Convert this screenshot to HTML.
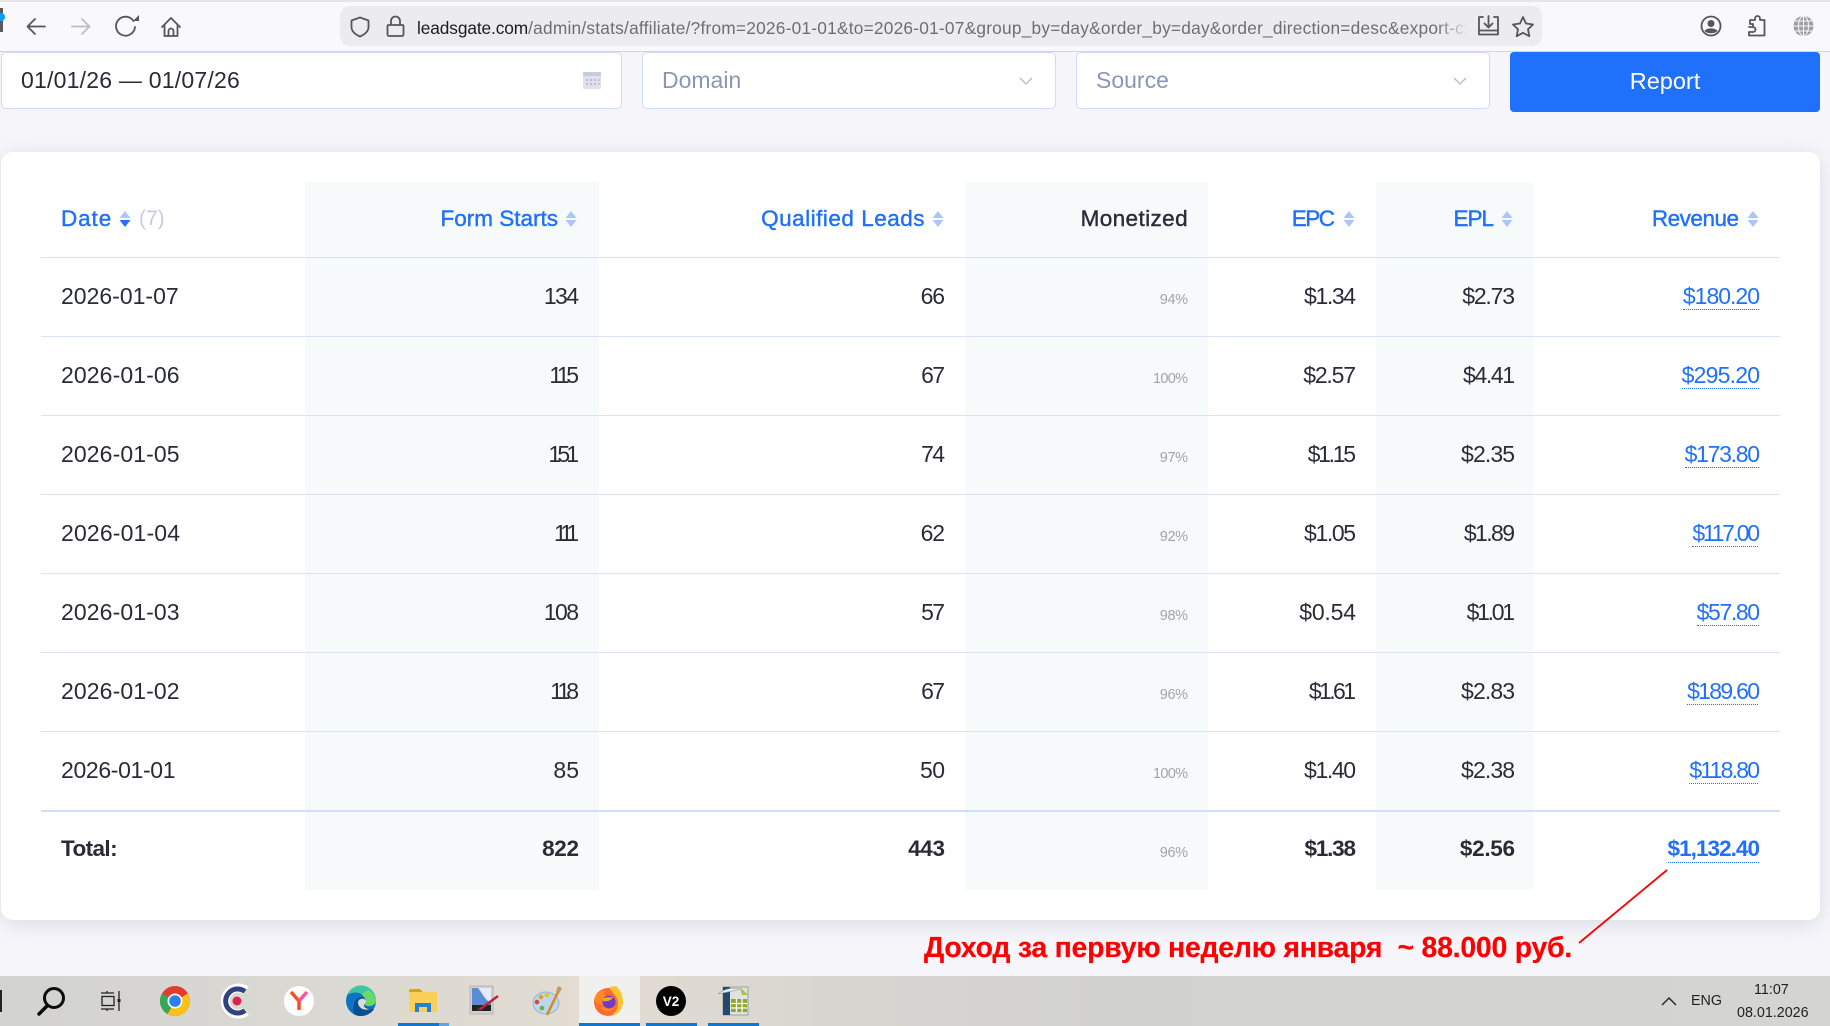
<!DOCTYPE html>
<html lang="en"><head><meta charset="utf-8"><title>Leadsgate stats</title>
<style>
html,body{margin:0;padding:0;width:1830px;height:1026px;overflow:hidden;background:#f6f6fa;font-family:"Liberation Sans","Noto Sans CJK SC",sans-serif;color:#2b2b38}
*{box-sizing:border-box}
.a{position:absolute}
#bar{left:0;top:0;width:1830px;height:52px;background:#f9f9fb;border-top:2px solid #e6e6ea;border-bottom:1px solid #d6d6da}
#url{left:340px;top:6px;width:1202px;height:40px;background:#ececee;border-radius:10px}
#urlt{left:417px;top:8px;width:1051px;height:40px;line-height:40px;font-size:17.3px;letter-spacing:.23px;white-space:nowrap;overflow:hidden;color:#6e6e73;-webkit-mask-image:linear-gradient(90deg,#000 97%,transparent 100%);mask-image:linear-gradient(90deg,#000 97%,transparent 100%)}
#urlt b{font-weight:400;color:#1c1b22;letter-spacing:-.1px}
.inp{top:52px;height:57px;background:#fff;border:1px solid #cbdcf8;border-radius:5px;font-size:23px;line-height:54px}
.inp span{position:absolute;top:0;white-space:nowrap}
#rep{left:1510px;top:52px;width:310px;height:60px;background:#1f70fb;border-radius:4px;color:#fff;text-align:center;font-size:23.5px;line-height:58px}
#card{left:1px;top:152px;width:1819px;height:768px;background:#fff;border-radius:12px;box-shadow:0 4px 22px rgba(50,60,110,.14)}
.col{top:182px;height:708px;background:#f7fafb}
.ln{left:41px;width:1739px;height:1px;background:#d8e4f6}
.row{left:0;width:1830px;height:40px;line-height:40px;font-size:23px;white-space:nowrap}
.row div{position:absolute;top:0;letter-spacing:var(--l,0px);padding-right:calc(var(--l,0px) * -1)}
.d{left:61px}
.c1{right:1251px}.c2{right:885px}.c3{right:642px;font-size:14.5px;color:#a3a3a8;top:4px!important}
.c4{right:474px}.c5{right:315px}.c6{right:70px;color:#1f70fb}
.c6 span{border-bottom:1px dotted #1f70fb;display:inline-block;line-height:26px}
.tot{font-weight:700;font-size:22.5px}
.tot .c3{font-weight:400;font-size:14.5px}
.tot .c6{font-weight:700}
.h{font-size:22.5px;height:40px;line-height:40px;top:199px;color:#1f70fb;white-space:nowrap;-webkit-text-stroke:.4px currentColor;letter-spacing:var(--l,0px);padding-right:calc(var(--l,0px) * -1)}
#red{left:924px;top:926px;width:660px;height:44px;line-height:44px;font-size:28.4px;font-weight:700;color:#f00;white-space:pre;letter-spacing:-.22px;-webkit-text-stroke:.2px #f00}
#task{left:0;top:976px;width:1830px;height:50px;background:linear-gradient(90deg,#d2d2d0 0,#d9d8d3 15%,#e2dcd2 32%,#d9d6d1 45%,#d1d1cf 60%,#d4d4d2 100%)}
#act{left:579px;top:976px;width:61px;height:50px;background:#f0f0ef}
.u{top:1023px;height:3px;background:#0a78d4}
.tr{font-size:14.3px;color:#222;white-space:nowrap;line-height:20px;height:20px}
svg{position:absolute;left:0;top:0}
</style></head><body>
<div class="a" id="bar"></div>
<div class="a" id="url"></div>
<div class="a" id="urlt"><b>leadsgate.com</b>/admin/stats/affiliate/?from=2026-01-01&amp;to=2026-01-07&amp;group_by=day&amp;order_by=day&amp;order_direction=desc&amp;export-csv</div>

<div class="a inp" style="left:1px;width:621px"><span style="left:19px;letter-spacing:.22px">01/01/26 — 01/07/26</span></div>
<div class="a inp" style="left:642px;width:414px;color:#8b96b5"><span style="left:19px">Domain</span></div>
<div class="a inp" style="left:1076px;width:414px;color:#8b96b5"><span style="left:19px">Source</span></div>
<div class="a" id="rep">Report</div>

<div class="a" id="card"></div>
<div class="a col" style="left:305px;width:294px"></div>
<div class="a col" style="left:965px;width:243px"></div>
<div class="a col" style="left:1376px;width:157px"></div>

<div class="a ln" style="top:257px"></div>
<div class="a ln" style="top:336px"></div>
<div class="a ln" style="top:415px"></div>
<div class="a ln" style="top:494px"></div>
<div class="a ln" style="top:573px"></div>
<div class="a ln" style="top:652px"></div>
<div class="a ln" style="top:731px"></div>
<div class="a ln" style="top:810px;height:2px;background:#cfdefa"></div>

<div class="a h" style="left:61px;--l:.9px">Date</div>
<div class="a h" style="left:139px;color:#c6cbe0;-webkit-text-stroke:0;font-size:21px">(7)</div>
<div class="a h" style="right:1272px">Form Starts</div>
<div class="a h" style="right:905px;--l:.5px">Qualified Leads</div>
<div class="a h" style="right:642px;color:#2b2b38;--l:.4px">Monetized</div>
<div class="a h" style="right:495px;--l:-1.5px">EPC</div>
<div class="a h" style="right:336px;--l:-1px">EPL</div>
<div class="a h" style="right:91px;--l:-.5px">Revenue</div>

<div class="a row" style="top:276px"><div class="d">2026-01-07</div><div class="c1" style="--l:-1.6px">134</div><div class="c2" style="--l:-1.2px">66</div><div class="c3" style="--l:-.4px">94%</div><div class="c4" style="--l:-1.4px">$1.34</div><div class="c5" style="--l:-1.2px">$2.73</div><div class="c6" style="--l:-1px"><span>$180.20</span></div></div>
<div class="a row" style="top:355px"><div class="d" style="--l:.1px">2026-01-06</div><div class="c1" style="--l:-3.5px">115</div><div class="c2" style="--l:-1.7px">67</div><div class="c3" style="--l:-.7px">100%</div><div class="c4" style="--l:-1.2px">$2.57</div><div class="c5" style="--l:-1.4px">$4.41</div><div class="c6" style="--l:-.8px"><span>$295.20</span></div></div>
<div class="a row" style="top:434px"><div class="d" style="--l:.1px">2026-01-05</div><div class="c1" style="--l:-3.9px">151</div><div class="c2" style="--l:-1.7px">74</div><div class="c3" style="--l:-.4px">97%</div><div class="c4" style="--l:-2.3px">$1.15</div><div class="c5" style="--l:-.9px">$2.35</div><div class="c6" style="--l:-1.3px"><span>$173.80</span></div></div>
<div class="a row" style="top:513px"><div class="d" style="--l:.15px">2026-01-04</div><div class="c1" style="--l:-5px">111</div><div class="c2" style="--l:-1.2px">62</div><div class="c3" style="--l:-.4px">92%</div><div class="c4" style="--l:-1.4px">$1.05</div><div class="c5" style="--l:-1.6px">$1.89</div><div class="c6" style="--l:-2.3px"><span>$117.00</span></div></div>
<div class="a row" style="top:592px"><div class="d" style="--l:.1px">2026-01-03</div><div class="c1" style="--l:-1.6px">108</div><div class="c2" style="--l:-1.7px">57</div><div class="c3" style="--l:-.4px">98%</div><div class="c4" style="--l:-.2px">$0.54</div><div class="c5" style="--l:-2.3px">$1.01</div><div class="c6" style="--l:-1.4px"><span>$57.80</span></div></div>
<div class="a row" style="top:671px"><div class="d" style="--l:.1px">2026-01-02</div><div class="c1" style="--l:-3.9px">118</div><div class="c2" style="--l:-1.7px">67</div><div class="c3" style="--l:-.4px">96%</div><div class="c4" style="--l:-2.6px">$1.61</div><div class="c5" style="--l:-.9px">$2.83</div><div class="c6" style="--l:-1.7px"><span>$189.60</span></div></div>
<div class="a row" style="top:750px"><div class="d" style="--l:-.35px">2026-01-01</div><div class="c1">85</div><div class="c2" style="--l:-.6px">50</div><div class="c3" style="--l:-.7px">100%</div><div class="c4" style="--l:-1.4px">$1.40</div><div class="c5" style="--l:-.9px">$2.38</div><div class="c6" style="--l:-1.8px"><span>$118.80</span></div></div>
<div class="a row tot" style="top:829px"><div class="d" style="--l:-.6px">Total:</div><div class="c1" style="--l:-.3px">822</div><div class="c2" style="--l:-.3px">443</div><div class="c3" style="--l:-.4px">96%</div><div class="c4" style="--l:-1.2px">$1.38</div><div class="c5" style="--l:-.3px">$2.56</div><div class="c6" style="--l:-.95px"><span>$1,132.40</span></div></div>

<div class="a" id="red">Доход за первую неделю января  ~ 88.000 руб.</div>

<div class="a" id="task"></div>
<div class="a" id="act"></div>
<div class="a u" style="left:398px;width:41px"></div>
<div class="a u" style="left:439px;width:10px;background:#5ea6e4"></div>
<div class="a u" style="left:579px;width:61px"></div>
<div class="a u" style="left:646px;width:51px"></div>
<div class="a u" style="left:708px;width:51px"></div>
<div class="a tr" style="left:1691px;top:991px">ENG</div>
<div class="a tr" style="left:1754px;top:980px">11:07</div>
<div class="a tr" style="left:1737px;top:1003px">08.01.2026</div>

<svg width="1830" height="1026" viewBox="0 0 1830 1026" fill="none">
<!-- left marker -->
<rect x="0" y="8" width="3" height="24" fill="#5b5b66"/><circle cx="1" cy="17" r="4" fill="#0a9dff"/>
<!-- nav -->
<g stroke="#55555c" stroke-width="1.8" stroke-linecap="round" stroke-linejoin="round">
<path d="M45 26.5H28M35 19l-7.5 7.5L35 34"/>
<path d="M72 26.5h17M82 19l7.5 7.5L82 34" stroke="#bdbdc2"/>
<path d="M133.500 21A9.500 9.500 0 1 0 135 27"/>
<path d="M162 27l9-9 9 9M164.500 25v11h13V25M168.500 36v-5a2.500 2.500 0 0 1 5 0v5"/>
<path d="M360 17.500l8.500 3v6.500c0 4.500-4 7.500-8.500 9.500-4.500-2-8.500-5-8.500-9.500v-6.500z"/>
<path d="M391 25v-4a4.500 4.500 0 0 1 9 0v4M388.500 25h14a1 1 0 0 1 1 1v8.500a1.500 1.500 0 0 1-1.500 1.500h-13a1.500 1.500 0 0 1-1.500-1.500V26a1 1 0 0 1 1-1z"/>
<path d="M1483 17h-4v17.500h19V17h-4M1488.500 16v11M1484.500 23.500l4 4 4-4M1479 30.500h19"/>
<path d="M1523 17l3 6.500 7 1-5 4.800 1.300 6.900-6.300-3.400-6.300 3.400 1.300-6.900-5-4.800 7-1z"/>
<circle cx="1711" cy="26" r="9.500"/><circle cx="1711" cy="23.500" r="3.500" fill="#55555c" stroke="none"/><path d="M1704.500 31c2-3.500 11-3.500 13 0-3 3-10 3-13 0z" fill="#55555c" stroke="none"/>
<path d="M1749 27h4v-3h-3v-4h5v-1.500a2.500 2.500 0 0 1 5 0V20h4.500v15.500h-15.500v-3.500h4a2.300 2.300 0 0 0 0-5z"/>
</g>
<path d="M139 15v6h-6z" fill="#55555c"/>
<circle cx="1803.500" cy="26" r="10" fill="#a0a0a3"/>
<g stroke="#f9f9fb" stroke-width="1"><path d="M1793.500 26h20M1795 21h17M1795 31h17M1803.500 16v20"/><ellipse cx="1803.500" cy="26" rx="5" ry="10"/></g>
<!-- calendar, chevrons -->
<rect x="583" y="72" width="18" height="17" rx="2" fill="#dfe2ec"/><rect x="583" y="72" width="18" height="4" rx="1.500" fill="#c6ccdc"/>
<g fill="#b6bdd0"><rect x="586" y="79" width="2" height="2"/><rect x="590" y="79" width="2" height="2"/><rect x="594" y="79" width="2" height="2"/><rect x="598" y="79" width="1.500" height="2"/><rect x="586" y="83" width="2" height="2"/><rect x="590" y="83" width="2" height="2"/><rect x="594" y="83" width="2" height="2"/><rect x="598" y="83" width="1.500" height="2"/></g>
<path d="M1020 78l6 6 6-6M1454 78l6 6 6-6" stroke="#b3bbd0" stroke-width="1.300"/>
<!-- sort arrows -->
<g fill="#a9c6ff">
<path d="M125 211l5.500 7h-11z"/>
<path d="M571 211l5.500 7h-11zM571 227l5.500-7h-11z"/>
<path d="M938 211l5.500 7h-11zM938 227l5.500-7h-11z"/>
<path d="M1349 211l5.500 7h-11zM1349 227l5.500-7h-11z"/>
<path d="M1507 211l5.500 7h-11zM1507 227l5.500-7h-11z"/>
<path d="M1753 211l5.500 7h-11zM1753 227l5.500-7h-11z"/>
</g>
<path d="M125 227l5.500-7h-11z" fill="#1f70fb"/>
<!-- red line -->
<path d="M1667 870L1579 943" stroke="#f00" stroke-width="1.800"/>
<!-- taskbar -->
<rect x="0" y="990" width="2" height="22" fill="#222"/>
<circle cx="54" cy="998" r="9.500" stroke="#0c0c0c" stroke-width="3"/><path d="M47 1006l-8 8" stroke="#0c0c0c" stroke-width="3.500" stroke-linecap="round"/>
<g stroke="#222" stroke-width="1.300"><path d="M101 993h13M101 1009h13M107 991v2M107 1009v2"/><rect x="102" y="996.500" width="12" height="9"/><path d="M119 991v20"/></g><rect x="117.500" y="999" width="3" height="3" fill="#222"/>
<!-- chrome -->
<circle cx="175" cy="1001" r="15" fill="#e33b2e"/>
<path d="M175 1001L167.500 1014A15 15 0 0 0 190 1001 15 15 0 0 0 187.900 993.500z" fill="#fbc116"/>
<path d="M175 1001L162 993.500A15 15 0 0 0 160 1001 15 15 0 0 0 167.500 1014z" fill="#34a853"/>
<circle cx="175" cy="1001" r="7.500" fill="#fff"/><circle cx="175" cy="1001" r="5.800" fill="#2e7fee"/>
<!-- C -->
<path d="M246 990.500a13 13 0 1 0 0 21" stroke="#fff" stroke-width="9"/>
<path d="M245 991.500a12 12 0 1 0 0 19" stroke="#2f4380" stroke-width="5"/>
<circle cx="237" cy="1001" r="4.500" fill="#d92551"/>
<!-- Yandex -->
<circle cx="299" cy="1001" r="15" fill="#fff"/>
<path d="M291 992l8 9v9" stroke="#f94f20" stroke-width="3.500"/><path d="M307 992l-8 9" stroke="#f9539a" stroke-width="3.500"/>
<!-- edge -->
<circle cx="361" cy="1001" r="15" fill="#0e73c6"/>
<path d="M347 995a15 15 0 0 1 29 5c0 4-3 6-7 6-3 0-5-1-5-3 1-3 1-8-5-10-5-1-9 0-12 2z" fill="#3ec6a0"/>
<path d="M368 990a15 15 0 0 1 8 10c0 4-3 6-7 6-3 0-5-1-5-3 1-2 1-6-2-8 2-3 4-4 6-5z" fill="#6ad96a"/>
<path d="M353 1011c0-8 3-14 9-14 3 0 4 2 3 5s1 6 5 7l4 0c-2 4-8 7-13 7-4 0-8-1-8-5z" fill="#0a4f92"/>
<path d="M359 1000c2-2 6-2 7 1 0 2-2 3-2 5 1 2 3 3 6 3-3 1-7 1-9-1-3-2-4-6-2-8z" fill="#d8dcd8"/>
<!-- folder -->
<path d="M409 991a2 2 0 0 1 2-2h9l3 3h-14z" fill="#d9a310"/>
<rect x="409" y="992" width="28" height="20" rx="1.500" fill="#fbd05a"/>
<path d="M415 1012v-9h16v9h-4v-5h-8v5z" fill="#1f84d8"/>
<!-- paint -->
<rect x="470" y="986" width="23" height="28" fill="#d2d0cc" stroke="#b5b5b5"/>
<rect x="472" y="988" width="19" height="19" fill="#5b8ad6"/><path d="M478 988h13v14c-5 0-8-8-13-14z" fill="#e4eaf6"/>
<rect x="472" y="1005" width="19" height="6" fill="#222"/>
<path d="M498 996l-19 14" stroke="#b9273a" stroke-width="2.500"/><path d="M476 1011l4-2-2-2z" fill="#333"/>
<!-- palette -->
<ellipse cx="546" cy="1003" rx="13" ry="11" fill="#bcd6ec" stroke="#93b7d4"/>
<circle cx="537" cy="1002" r="2.300" fill="#d9483b"/><circle cx="541" cy="997" r="2.300" fill="#e0a02c"/><circle cx="547" cy="995" r="2.300" fill="#e8c31f"/><circle cx="542" cy="1008" r="2.300" fill="#6dae4a"/>
<path d="M547 1015l11-23" stroke="#d98a1f" stroke-width="2.500"/><path d="M556 992l2-6 4 2-3 6z" fill="#bf9a6a"/>
<!-- firefox -->
<circle cx="608" cy="1002" r="14" fill="#ff6a30"/>
<path d="M609 987c2 0 5-1 7-1 5 4 7 10 7 16a14 14 0 0 1-12 14c4-3 7-7 7-13 0-6-5-9-9-16z" fill="#ffc42e"/>
<path d="M594 1000c1-5 5-9 11-10-2 3-1 6 2 7 5 0 8 3 8 7a8 8 0 0 1-15 3c3 1 5 0 5-2-4 0-8-1-11-5z" fill="#ff8a1f"/>
<circle cx="609" cy="1002" r="6.500" fill="#6b3fc4"/><path d="M603 999c3-3 8-1 10-2-1 3-5 5-10 4z" fill="#ffa326"/>
<!-- V2 -->
<circle cx="671" cy="1001" r="15" fill="#000"/>
<!-- spreadsheet -->
<rect x="723" y="987" width="25" height="28" fill="#dfe3df" stroke="#9aa0a0"/>
<rect x="723" y="987" width="7" height="28" fill="#24496b"/>
<path d="M718 994c6-5 14-7 22-5-4 2-14 3-22 5z" fill="#e8ecef" stroke="#8a9aa5" stroke-width=".6"/>
<path d="M740 987l8 8h-6z" fill="#a8c044"/>
<rect x="731" y="999" width="16" height="13" fill="#8aa82c"/>
<path d="M731 1003.500h16M731 1008h16M736.500 999v13M742 999v13" stroke="#fff" stroke-width="1.300"/>
<path d="M1662 1005l7-7 7 7" stroke="#222" stroke-width="1.400"/>
<text x="671" y="1006" font-family="Liberation Sans,sans-serif" font-weight="700" font-size="13.500" fill="#fff" text-anchor="middle">V2</text>
</svg>
</body></html>
